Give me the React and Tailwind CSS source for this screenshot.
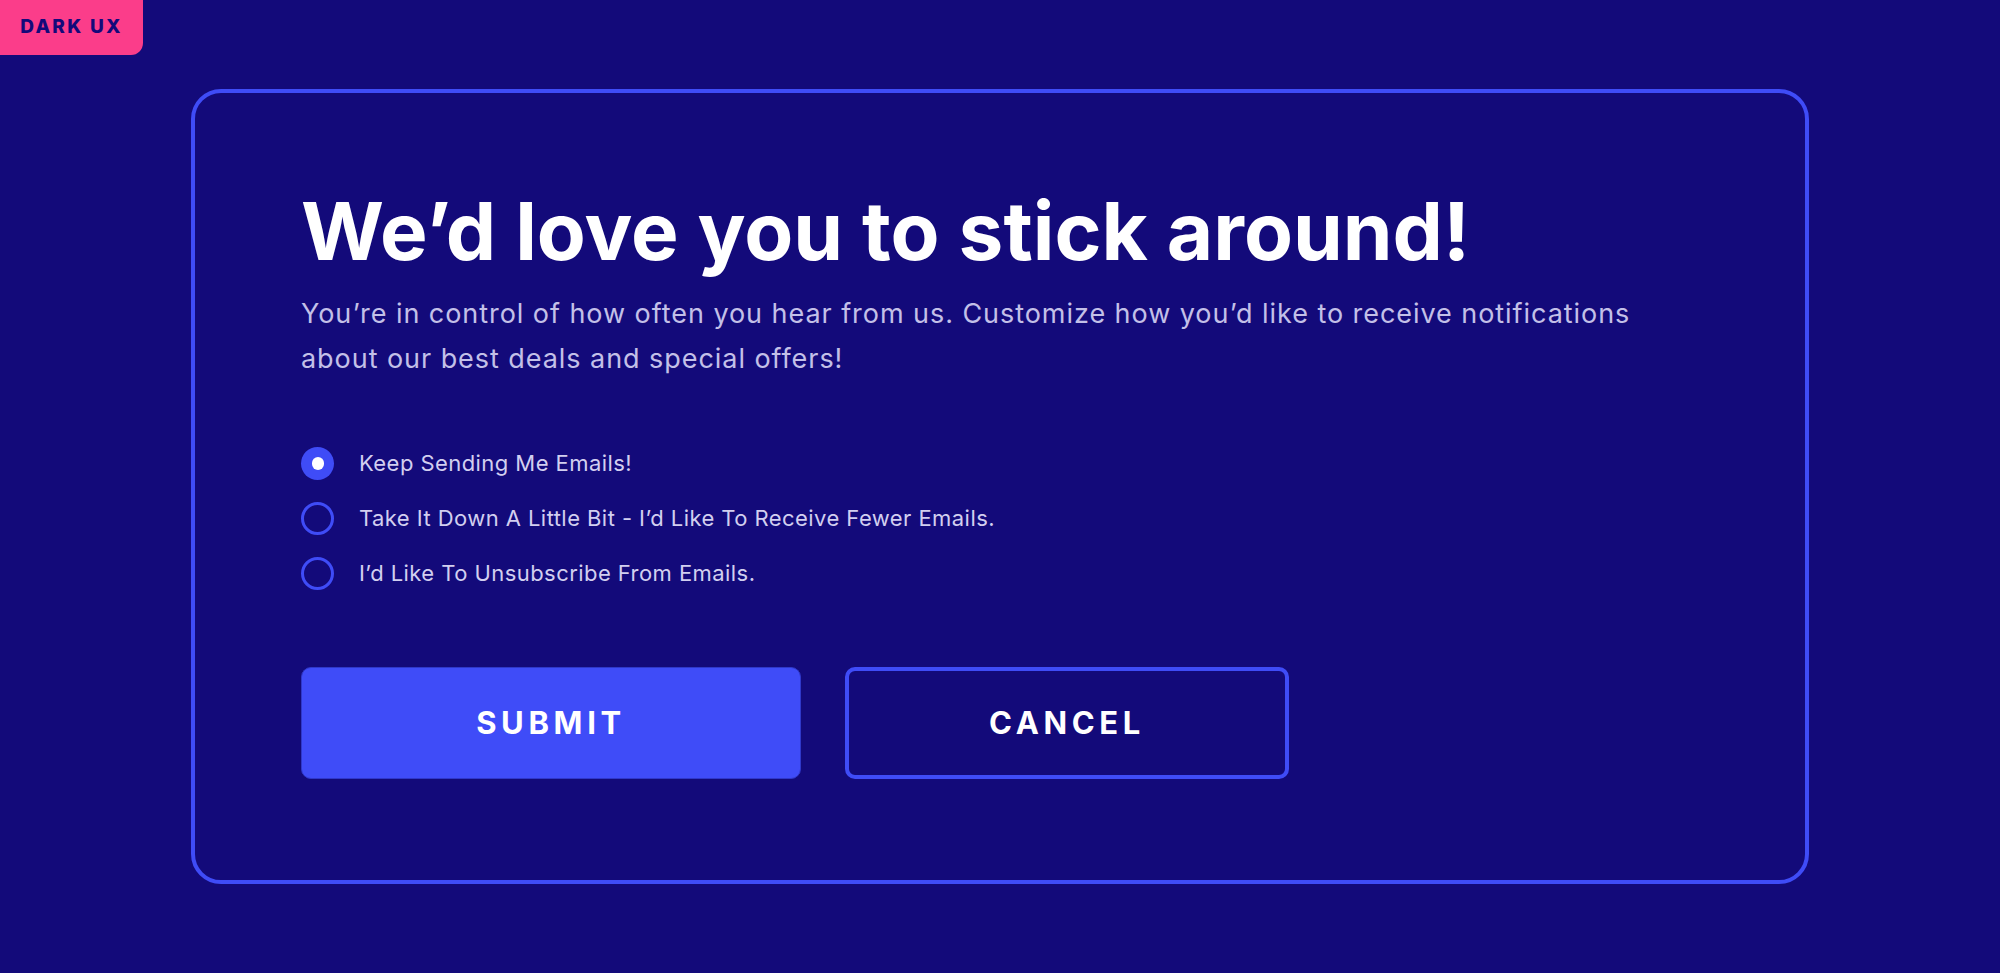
import { useState } from 'react';

const options = [
  { id: 'keep', label: 'Keep Sending Me Emails!' },
  { id: 'fewer', label: 'Take It Down A Little Bit - I’d Like To Receive Fewer Emails.' },
  { id: 'unsub', label: 'I’d Like To Unsubscribe From Emails.' },
];

export default function App() {
  const [choice, setChoice] = useState('keep');

  return (
    <div className="relative w-full h-[973px] bg-[#130a7a] flex items-center justify-center font-['Inter',sans-serif]">
      <div className="absolute top-0 left-0 w-[143px] h-[55px] bg-[#fb3d8a] rounded-br-[12px] flex items-center justify-center">
        <span className="text-[19px] font-extrabold tracking-[0.12em] text-[#14097a]">DARK UX</span>
      </div>

      <div className="w-[1618px] h-[795px] border-4 border-[#3f4cf7] rounded-[30px] pl-[106px] pt-[98px]">
        <h1 className="text-[80px] leading-none font-bold text-white">
          We’d love you to stick around!
        </h1>
        <p className="mt-[20px] text-[27px] leading-[45px] tracking-[0.035em] text-[#c3c0e8] max-w-[1360px]">
          You’re in control of how often you hear from us. Customize how you’d like to receive notifications about our best deals and special offers!
        </p>

        <div className="mt-[66px] flex flex-col gap-[22px]">
          {options.map(opt => (
            <label key={opt.id} className="flex items-center gap-[25px] cursor-pointer">
              <input
                type="radio"
                name="freq"
                className="sr-only"
                checked={choice === opt.id}
                onChange={() => setChoice(opt.id)}
              />
              {choice === opt.id ? (
                <span className="w-[33px] h-[33px] rounded-full bg-[#3f4cf7] flex items-center justify-center">
                  <span className="w-[12px] h-[13px] rounded-full bg-white" />
                </span>
              ) : (
                <span className="w-[33px] h-[33px] rounded-full border-[3px] border-[#3f4cf7]" />
              )}
              <span className="text-[22px] tracking-[0.02em] text-[#d2cff0]">{opt.label}</span>
            </label>
          ))}
        </div>

        <div className="mt-[77px] flex gap-[44px]">
          <button className="w-[500px] h-[112px] rounded-[10px] bg-[#3f4cf8] border border-[#2f38c9] text-white text-[31px] font-bold tracking-[0.15em]">
            SUBMIT
          </button>
          <button className="w-[444px] h-[112px] rounded-[10px] border-4 border-[#3f4cf7] text-white text-[31px] font-bold tracking-[0.15em]">
            CANCEL
          </button>
        </div>
      </div>
    </div>
  );
}
